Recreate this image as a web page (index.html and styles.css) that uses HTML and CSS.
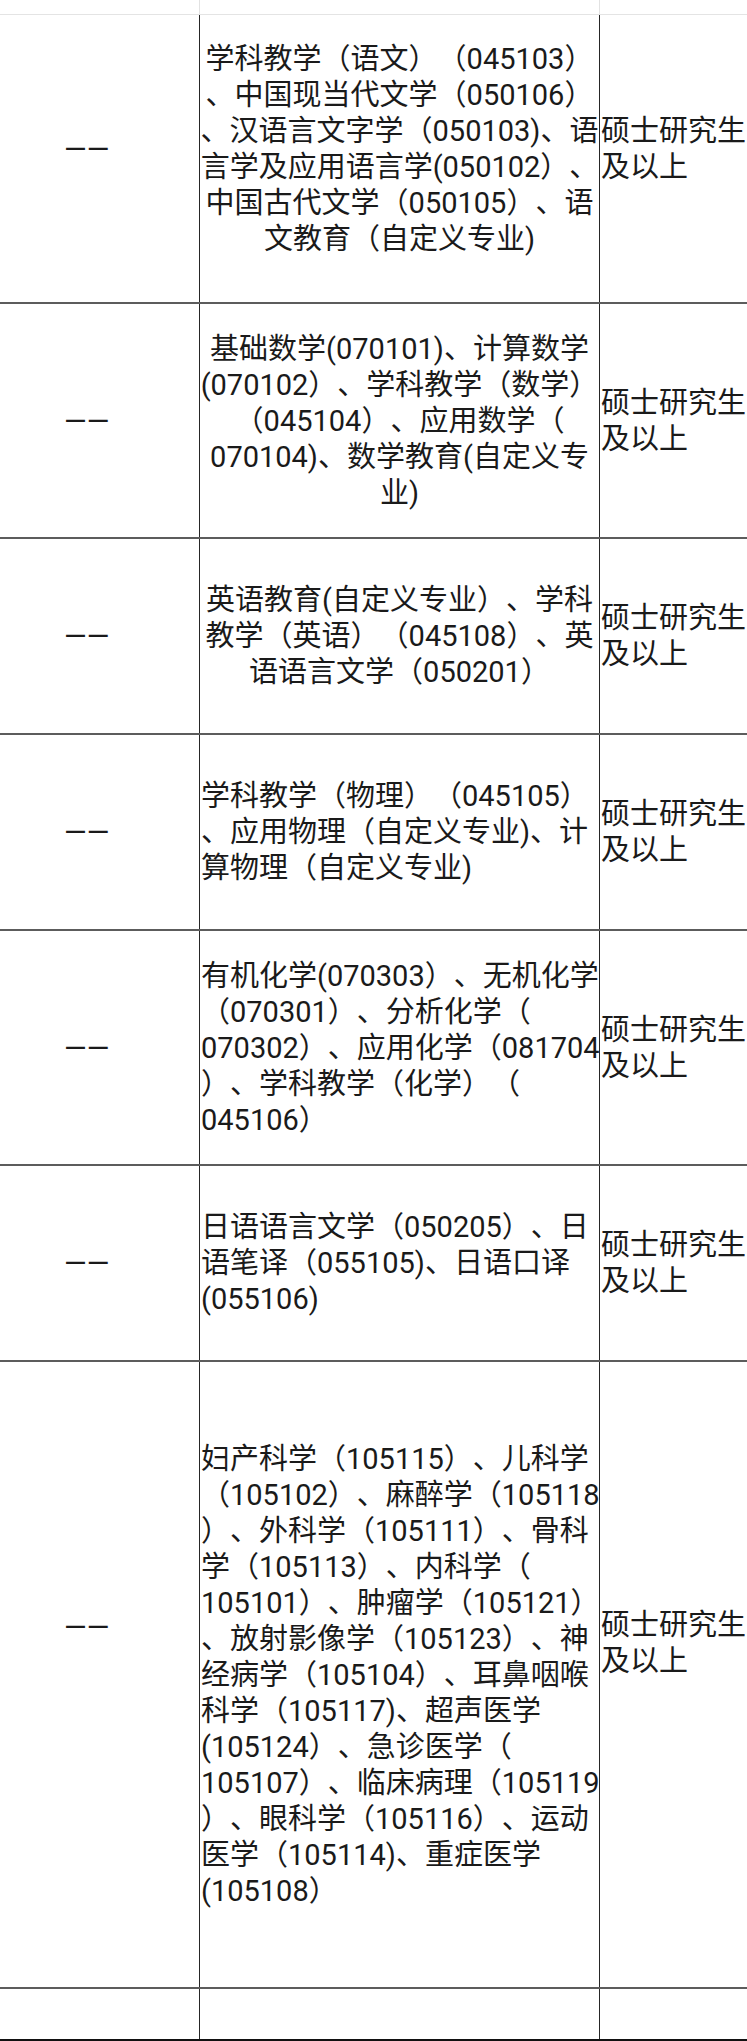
FILE: index.html
```html
<!DOCTYPE html>
<html lang="zh-CN">
<head>
<meta charset="utf-8">
<title>专业要求</title>
<link rel="stylesheet" href="styles.css">
</head>
<body>
<div class="table">
  <div class="row row-faded">
    <div class="cell"></div>
    <div class="cell"></div>
    <div class="cell"></div>
  </div>

  <div class="row h289 shift-up">
    <div class="cell c1">——</div>
    <div class="cell c2 center">学科教学（语文）（045103）<br>、中国现当代文学（050106）<br>、汉语言文字学（050103)、语<br>言学及应用语言学(050102）、<br>中国古代文学（050105）、语<br>文教育（自定义专业)</div>
    <div class="cell c3">硕士研究生<br>及以上</div>
  </div>

  <div class="row h235">
    <div class="cell c1">——</div>
    <div class="cell c2 center">基础数学(070101)、计算数学<br>(070102）、学科教学（数学）<br>（045104）、应用数学（<br>070104)、数学教育(自定义专<br>业)</div>
    <div class="cell c3">硕士研究生<br>及以上</div>
  </div>

  <div class="row h196">
    <div class="cell c1">——</div>
    <div class="cell c2 center">英语教育(自定义专业）、学科<br>教学（英语）（045108）、英<br>语语言文学（050201）</div>
    <div class="cell c3">硕士研究生<br>及以上</div>
  </div>

  <div class="row h196">
    <div class="cell c1">——</div>
    <div class="cell c2">学科教学（物理）（045105）<br>、应用物理（自定义专业)、计<br>算物理（自定义专业)</div>
    <div class="cell c3">硕士研究生<br>及以上</div>
  </div>

  <div class="row h235">
    <div class="cell c1">——</div>
    <div class="cell c2">有机化学(070303）、无机化学<br>（070301）、分析化学（<br>070302）、应用化学（081704<br>）、学科教学（化学）（<br>045106）</div>
    <div class="cell c3">硕士研究生<br>及以上</div>
  </div>

  <div class="row h196">
    <div class="cell c1">——</div>
    <div class="cell c2">日语语言文学（050205）、日<br>语笔译（055105)、日语口译<br>(055106)</div>
    <div class="cell c3">硕士研究生<br>及以上</div>
  </div>

  <div class="row h627 tall">
    <div class="cell c1">——</div>
    <div class="cell c2">妇产科学（105115）、儿科学<br>（105102）、麻醉学（105118<br>）、外科学（105111）、骨科<br>学（105113）、内科学（<br>105101）、肿瘤学（105121）<br>、放射影像学（105123）、神<br>经病学（105104）、耳鼻咽喉<br>科学（105117)、超声医学<br>(105124）、急诊医学（<br>105107）、临床病理（105119<br>）、眼科学（105116）、运动<br>医学（105114)、重症医学<br>(105108）</div>
    <div class="cell c3">硕士研究生<br>及以上</div>
  </div>

  <div class="row h52 last">
    <div class="cell c1"></div>
    <div class="cell c2"></div>
    <div class="cell c3"></div>
  </div>
</div>
</body>
</html>
```

FILE: styles.css
```css
html, body {
  margin: 0;
  padding: 0;
  background: #ffffff;
}

body {
  width: 747px;
  overflow: hidden;
  font-family: Roboto, "Noto Sans CJK SC", sans-serif;
  font-size: 29px;
  line-height: 36px;
  color: #1a1a1a;
  text-spacing-trim: space-all;
}

.table {
  display: flex;
  flex-direction: column;
}

.row {
  display: grid;
  grid-template-columns: 200px 400px 147px;
  box-sizing: border-box;
  border-bottom: 2px solid #5c5c5c;
}

.cell {
  box-sizing: border-box;
  display: flex;
  align-items: center;
  white-space: nowrap;
  border-right: 1px solid #262626;
  overflow: visible;
}

.cell:last-child {
  border-right: none;
}

.row-faded {
  height: 15px;
  border-bottom: 1px solid #e4e4e4;
}

.row-faded .cell {
  border-right-color: #e2e2e2;
}

.h289 { height: 289px; }
.h235 { height: 235px; }
.h196 { height: 196px; }
.h627 { height: 627px; }
.h52  { height: 52px; }

.shift-up .cell {
  padding-bottom: 20px;
}

.tall .c1 {
  padding-bottom: 96px;
}

.tall .c3 {
  padding-bottom: 64px;
}

.last {
  border-bottom: 2px solid #111111;
}

.c1 {
  padding-left: 64px;
}

.c2 {
  padding-left: 1px;
}

.c2.center {
  justify-content: center;
  text-align: center;
  padding-left: 0;
}

.c3 {
  padding-left: 1px;
}
```
